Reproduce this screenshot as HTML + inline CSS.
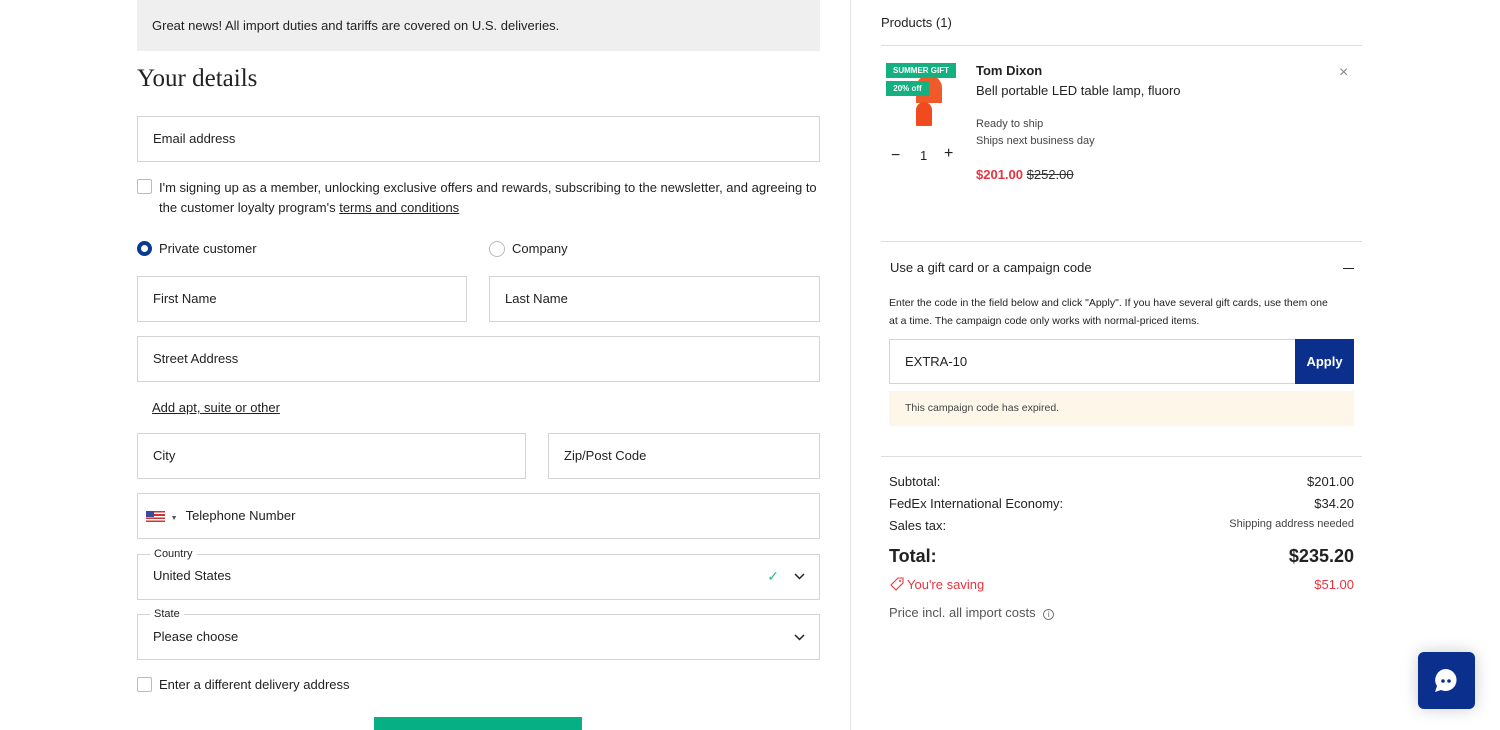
<!DOCTYPE html>
<html><head><meta charset="utf-8"><style>
*{box-sizing:border-box;margin:0;padding:0}
body{width:1500px;height:730px;overflow:hidden;background:#fff;font-family:"Liberation Sans",Arial,sans-serif;font-size:13px;color:#222;position:relative}
.a{position:absolute}
.inp{position:absolute;border:1px solid #d4d4d4;height:46px;padding-left:15px;line-height:44px;font-size:13px;color:#222}
.lbl{position:absolute;top:-8px;left:12px;background:#fff;padding:0 4px;font-size:11px;line-height:14px}
.cb{position:absolute;width:15px;height:15px;border:1px solid #bbb;border-radius:2px;background:#fff}
.row{position:absolute;left:889px;width:465px;display:flex;justify-content:space-between}
</style></head><body>
<div class="a" style="left:137px;top:0;width:683px;height:51px;background:#efeff0;padding-left:15px;line-height:52px">Great news! All import duties and tariffs are covered on U.S. deliveries.</div>
<div class="a" style="left:137px;top:65px;font-family:'Liberation Serif',serif;font-size:25px">Your details</div>
<div class="inp" style="left:137px;top:116px;width:683px">Email address</div>
<div class="cb" style="left:137px;top:179px"></div>
<div class="a" style="left:159px;top:178px;line-height:20px;width:670px">I'm signing up as a member, unlocking exclusive offers and rewards, subscribing to the newsletter, and agreeing to the customer loyalty program's <u>terms and conditions</u></div>
<div class="a" style="left:137px;top:241px;width:15px;height:15px;border-radius:50%;border:4px solid #0b3a8f"></div>
<div class="a" style="left:159px;top:241px">Private customer</div>
<div class="a" style="left:489px;top:241px;width:16px;height:16px;border-radius:50%;border:1px solid #bbb"></div>
<div class="a" style="left:512px;top:241px">Company</div>
<div class="inp" style="left:137px;top:276px;width:330px">First Name</div>
<div class="inp" style="left:489px;top:276px;width:331px">Last Name</div>
<div class="inp" style="left:137px;top:336px;width:683px">Street Address</div>
<div class="a" style="left:152px;top:400px"><u>Add apt, suite or other</u></div>
<div class="inp" style="left:137px;top:433px;width:389px">City</div>
<div class="inp" style="left:548px;top:433px;width:272px">Zip/Post Code</div>
<div class="inp" style="left:137px;top:493px;width:683px;padding-left:8px"><span style="display:inline-block;width:19px;height:11px;background:repeating-linear-gradient(#c33 0 1.6px,#fff 1.6px 3.2px);vertical-align:middle;position:relative"><span style="position:absolute;left:0;top:0;width:8px;height:6px;background:#3b4a9a"></span></span> <span style="font-size:7px;color:#555;margin:0 8px 0 2px">▼</span>Telephone Number</div>
<div class="inp" style="left:137px;top:554px;width:683px;line-height:42px"><span class="lbl">Country</span>United States<span class="a" style="right:40px;top:0;color:#2b9;font-size:14px">✓</span><svg class="a" style="right:14px;top:18px" width="11" height="7"><path d="M1 1l4.5 4.5L10 1" stroke="#222" stroke-width="1.5" fill="none"/></svg></div>
<div class="inp" style="left:137px;top:614px;width:683px;line-height:44px"><span class="lbl">State</span>Please choose<svg class="a" style="right:14px;top:19px" width="11" height="7"><path d="M1 1l4.5 4.5L10 1" stroke="#222" stroke-width="1.5" fill="none"/></svg></div>
<div class="cb" style="left:137px;top:677px"></div>
<div class="a" style="left:159px;top:677px">Enter a different delivery address</div>
<div class="a" style="left:374px;top:717px;width:208px;height:13px;background:#06b084"></div>
<div class="a" style="left:850px;top:0;width:1px;height:730px;background:#e3e3e3"></div>
<div class="a" style="left:881px;top:15px">Products (1)</div>
<div class="a" style="left:881px;top:45px;width:481px;height:1px;background:#ddd"></div>
<div class="a" style="left:916px;top:75px;width:26px;height:28px;background:#f05a28;border-radius:13px 13px 0 0"></div>
<div class="a" style="left:922px;top:92px;width:2px;height:12px;background:#f05a28"></div>
<div class="a" style="left:916px;top:102px;width:16px;height:24px;background:#f04a1e;border-radius:8px 8px 1px 1px"></div>
<div class="a" style="left:886px;top:63px;width:70px;height:15px;background:#14b07f;color:#fff;font-size:8px;font-weight:bold;text-align:center;line-height:15px">SUMMER GIFT</div>
<div class="a" style="left:886px;top:81px;width:43px;height:15px;background:#14b07f;color:#fff;font-size:8px;font-weight:bold;text-align:center;line-height:15px">20% off</div>
<div class="a" style="left:891px;top:147px;font-size:16px">−</div>
<div class="a" style="left:920px;top:148px">1</div>
<div class="a" style="left:944px;top:145px;font-size:16px">+</div>
<div class="a" style="left:976px;top:63px;font-weight:bold">Tom Dixon</div>
<div class="a" style="left:976px;top:83px">Bell portable LED table lamp, fluoro</div>
<div class="a" style="left:976px;top:118px;font-size:11px;color:#444">Ready to ship</div>
<div class="a" style="left:976px;top:135px;font-size:11px;color:#444">Ships next business day</div>
<div class="a" style="left:976px;top:167px;font-weight:bold;color:#e8343e">$201.00 <span style="color:#333;font-weight:normal;text-decoration:line-through">$252.00</span></div>
<div class="a" style="left:1339px;top:64px;font-size:16px;color:#888">×</div>
<div class="a" style="left:881px;top:241px;width:481px;height:1px;background:#ddd"></div>
<div class="a" style="left:890px;top:260px">Use a gift card or a campaign code</div>
<div class="a" style="left:1343px;top:268px;width:11px;height:1px;background:#222"></div>
<div class="a" style="left:889px;top:294px;width:450px;font-size:10.5px;line-height:18px">Enter the code in the field below and click "Apply". If you have several gift cards, use them one at a time. The campaign code only works with normal-priced items.</div>
<div class="inp" style="left:889px;top:339px;width:407px;height:45px">EXTRA-10</div>
<div class="a" style="left:1295px;top:339px;width:59px;height:45px;background:#0a2f8c;color:#fff;font-weight:bold;text-align:center;line-height:45px">Apply</div>
<div class="a" style="left:889px;top:391px;width:465px;height:35px;background:#fdf6e9;padding-left:16px;line-height:35px;font-size:10.5px;color:#444">This campaign code has expired.</div>
<div class="a" style="left:881px;top:456px;width:481px;height:1px;background:#ddd"></div>
<div class="row" style="top:474px"><span>Subtotal:</span><span>$201.00</span></div>
<div class="row" style="top:496px"><span>FedEx International Economy:</span><span>$34.20</span></div>
<div class="row" style="top:518px"><span>Sales tax:</span><span style="font-size:11px;color:#444">Shipping address needed</span></div>
<div class="row" style="top:546px;font-size:18px;font-weight:bold"><span>Total:</span><span>$235.20</span></div>
<div class="row" style="top:577px;color:#e8343e"><span><svg width="16" height="14" style="vertical-align:-2px;margin-right:2px"><path d="M2 8l7-7h5v5l-7 7z" fill="none" stroke="#e8343e" stroke-width="1.1"/><circle cx="11" cy="4" r="1" fill="#e8343e"/></svg>You're saving</span><span>$51.00</span></div>
<div class="a" style="left:889px;top:605px;color:#555">Price incl. all import costs <span style="display:inline-block;width:11px;height:11px;border:1px solid #777;border-radius:50%;font-size:8px;text-align:center;line-height:9px;margin-left:4px">i</span></div>
<div class="a" style="left:1418px;top:652px;width:57px;height:57px;background:#0a2f8c;border-radius:6px;box-shadow:0 0 16px rgba(0,0,0,.2)">
<svg width="57" height="57"><path d="M28 17a11 11 0 1 1-5 21l-6 2 2-6a11 11 0 0 1 9-17z" fill="#fff"/><circle cx="25" cy="29" r="1.8" fill="#0a2f8c"/><circle cx="31" cy="29" r="1.8" fill="#0a2f8c"/></svg></div>
</body></html>
